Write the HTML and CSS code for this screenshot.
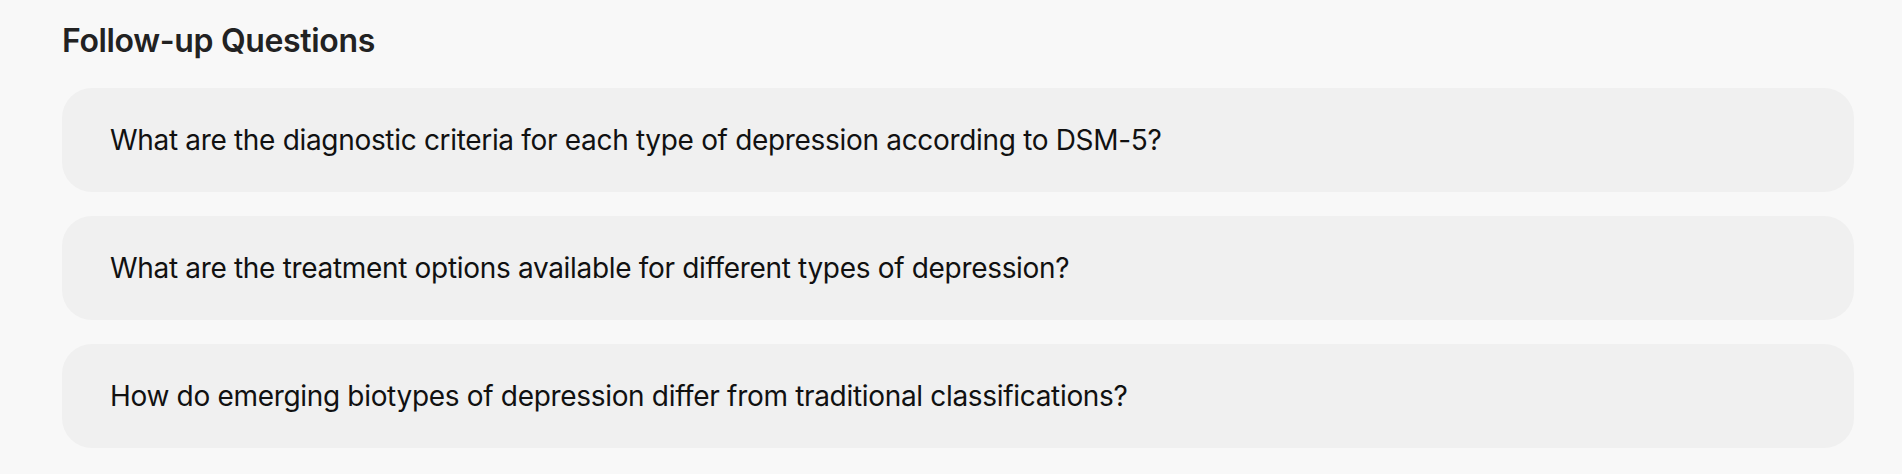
FILE: index.html
```html
<!DOCTYPE html>
<html lang="en">
<head>
  <meta charset="UTF-8">
  <meta name="viewport" content="width=device-width, initial-scale=1">
  <title>Follow-up Questions</title>
  <link rel="stylesheet" href="styles.css">
</head>
<body>

<div class="followups">
  <h2 class="title">Follow-up Questions</h2>
  <div class="questions">
    <button class="question">What are the diagnostic criteria for each type of depression according to DSM-5?</button>
    <button class="question">What are the treatment options available for different types of depression?</button>
    <button class="question">How do emerging biotypes of depression differ from traditional classifications?</button>
  </div>
</div>

</body>
</html>
```

FILE: styles.css
```css
* {
  box-sizing: border-box;
  margin: 0;
  padding: 0;
}

body {
  font-family: Inter, 'Noto Sans', sans-serif;
  background-color: #f8f8f8;
  color: #111;
}

.followups {
  padding: 21px 48px 0 62px;
}

.title {
  font-size: 32px;
  font-weight: 600;
  color: #222;
  line-height: 40px;
  letter-spacing: -0.35px;
  margin-bottom: 27px;
}

.questions {
  display: flex;
  flex-direction: column;
  gap: 24px;
}

.question {
  display: flex;
  align-items: center;
  height: 104px;
  padding: 0 48px;
  border: none;
  border-radius: 30px;
  background-color: #f0f0f0;
  font-family: inherit;
  font-size: 28px;
  letter-spacing: -0.32px;
  color: #111;
  text-align: left;
  cursor: pointer;
}

.question:hover {
  background-color: #e8e8e8;
}
```
